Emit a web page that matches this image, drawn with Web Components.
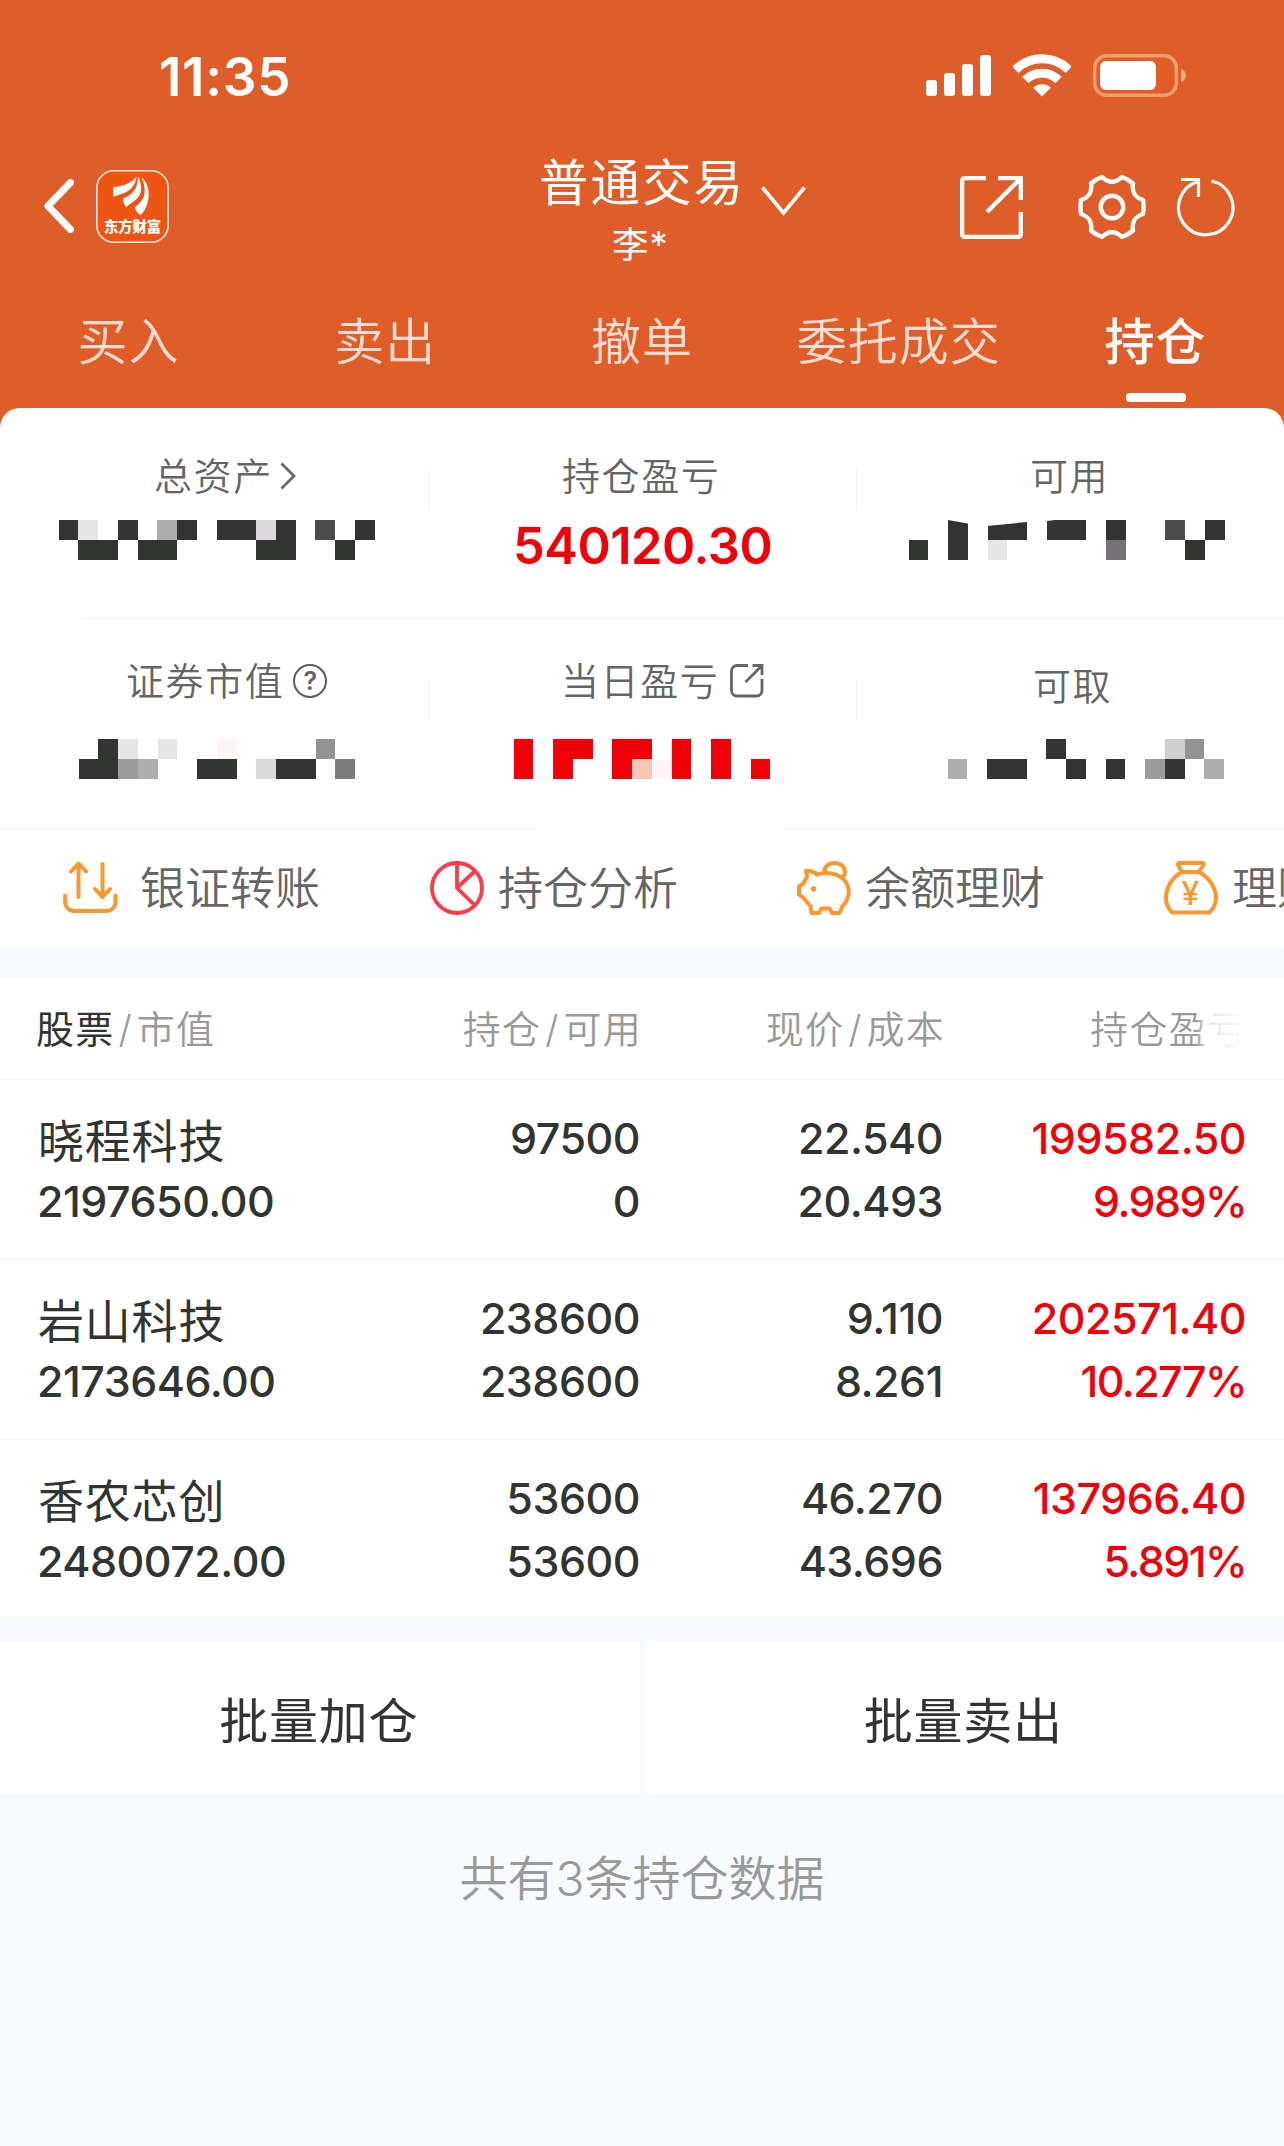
<!DOCTYPE html>
<html lang="zh-CN">
<head>
<meta charset="UTF-8">
<meta name="viewport" content="width=device-width, initial-scale=1.0">
<title>普通交易 - 持仓</title>
<style>
    body {
        margin: 0;
        background: #f7faff;
        font-family: Inter, "Noto Sans CJK SC", sans-serif;
        color: #323431;
        --brand: #df5d29;
        --line: #f3f3f3;
        --up: #f00008;
    }
</style>
</head>
<body>
<trade-app></trade-app>

<script>
// Iconos de la app, cada uno con su propio tamaño
const ICONS = {
    signal: [65, 42, `<g fill="#fff"><rect y="25" width="11" height="16" rx="3"/><rect x="18" y="18" width="11" height="23" rx="3"/><rect x="36" y="9" width="11" height="32" rx="3"/><rect x="54" width="11" height="41" rx="3"/></g>`],
    wifi: [58, 43, `<g fill="none" stroke="#fff" stroke-width="9"><path d="M2.3 15.9a37.7 37.7 0 0 1 53.4 0"/><path d="M12.4 26a23.5 23.5 0 0 1 33.2 0"/></g><path d="M29 42.5l-8.8-8.8a13 13 0 0 1 17.6 0z" fill="#fff"/>`],
    battery: [94, 43, `<rect x="1.7" y="1.7" width="81.6" height="39.6" rx="12" fill="none" stroke="#f09d72" stroke-width="3.4"/><rect x="7" y="7" width="56" height="29" rx="6" fill="#fff"/><path d="M88 15v13c3-1 5-3.5 5-6.500s-2-5.500-5-6.500z" fill="#f2ab87"/>`],
    back: [30, 54, `<path d="M26.500 3.500L4 27l22.500 23.500" fill="none" stroke="#fff" stroke-width="7" stroke-linecap="round" stroke-linejoin="round"/>`],
    logo: [73, 73, `<rect x=".8" y=".8" width="71.400" height="71.400" rx="17" fill="#ef5512" stroke="#ffe9df" stroke-width="1.600"/>
        <g fill="#fff"><path d="M17.500 17c10-.5 18-4 23-10.500C40 15 34 21 27 23.500c-4 1.300-7 2-9.300 3.500-1-3-1-7-.2-10z"/><path d="M42 6.500C42 17 38 24 27 28.500c0 3.500 1.400 6 3 9C34 33 40.500 31 43.800 25c2.500-6 1.200-13-1.800-18.500z"/><path d="M45.500 7.500c7 5 9.500 17 5 28.500-1.500 4-3.500 7-6 9-3-2-5.500-4.500-5.500-8 4-3 8-6.500 9.300-12.500 1-6.500-.3-12-2.800-17z"/></g>
        <text x="36.500" y="62" font-size="14.300" font-weight="900" fill="#fff" text-anchor="middle">东方财富</text>`],
    down: [45, 31, `<path d="M1.500 1.500l21 25.500 21-25.500" fill="none" stroke="#fff" stroke-width="3.600"/>`],
    share: [63, 63, `<g fill="none" stroke="#fff" stroke-width="4.300"><path d="M26 2.200H4.500a2.300 2.300 0 0 0-2.300 2.300v54a2.300 2.300 0 0 0 2.300 2.300h54a2.300 2.300 0 0 0 2.300-2.300V36"/><path d="M38 2.200h22.800V24M60 3L27 36"/></g>`],
    gear: [68, 66, `<g transform="translate(34 33)" fill="none" stroke="#fff" stroke-width="4.400" stroke-linejoin="round"><circle r="11.300"/><path d="M-10-30Q0-20.500 10-30Q16-28 21-23.500C19.500-14 23.500-9.500 31-7Q32 0 31 7C23.500 9.500 19.500 14 21 23.500Q16 28 10 30Q0 20.500-10 30Q-16 28-21 23.500C-19.500 14-23.500 9.500-31 7Q-32 0-31-7C-23.500-9.500-19.500-14-21-23.500Q-16-28-10-30Z"/></g>`],
    reload: [60, 60, `<g fill="none" stroke="#fff" stroke-width="3.200"><path d="M22 4.500A27.200 27.200 0 1 0 35.500 4"/><path d="M5 2.500h17.500v17.500"/></g>`],
    more: [16, 28, `<path d="M1.500 1.500L14 14 1.500 26.500" fill="none" stroke="#686868" stroke-width="2.800"/>`],
    open: [34, 34, `<g fill="none" stroke="#656565" stroke-width="2.800"><path d="M18 1.500H7a5.500 5.500 0 0 0-5.500 5.500v19.500A5.500 5.500 0 0 0 7 32h19.500a5.500 5.500 0 0 0 5.500-5.500V15"/><path d="M22.500 1.500H32V11M31.500 2L15.500 18"/></g>`],
    transfer: [55, 54, `<g fill="none" stroke="#fb972f" stroke-width="4" stroke-linecap="round" stroke-linejoin="round"><path d="M15.500 36V3M8 10.500L15.500 2.500 23 10.500M39.500 3v33M32 28l7.500 8 7.500-8"/><path d="M2.200 34.500v6.500a9 9 0 0 0 9 9h32.300a9 9 0 0 0 9-9v-6.500"/></g>`],
    pie: [54, 54, `<g fill="none" stroke="#fb3d4a" stroke-width="3.800"><circle cx="27" cy="27" r="25"/><path d="M27 2v25l18 17.500M27 27l18-17"/></g>`],
    piggy: [54, 54, `<g fill="none" stroke="#fb972f" stroke-width="4" stroke-linejoin="round"><path d="M9 10c5-.5 8 .5 11 3.500 13-4 27 .5 31 12 2.500 8-1 15-6 20.500L42.500 52H35l-2.500-4.500h-8L22 52h-7.500L13.500 45 6 36.500 2 33.500v-8l4-2.500 4-7z"/><path d="M27 12c0-6 4.500-10 10.500-10s10.500 4 10.500 9c0 2-.5 3.500-1.500 5"/></g><circle cx="16.500" cy="28" r="2.800" fill="#fb972f"/>`],
    bag: [54, 54, `<g fill="none" stroke="#fb972f" stroke-width="4" stroke-linejoin="round"><path d="M18 11L14 4q-.5-2 1.500-2h22.500q2 0 1.500 2l-4.500 7z"/><path d="M18 11C8 16 2 27 2 37c0 6 2 10.500 6 14.500h37.500c4-4 6.500-8.500 6.500-14.500 0-10-7-21-17-26"/></g><text x="26.500" y="44" font-size="32" font-weight="500" fill="#fb972f" text-anchor="middle">¥</text>`]
};

class AppIcon extends HTMLElement {
    constructor() {
        super();
        this.attachShadow({ mode: 'open' });
    }

    connectedCallback() {
        const [width, height, shape] = ICONS[this.getAttribute('name')];
        this.shadowRoot.innerHTML = `
        <style>
            :host { display: block; flex: none; width: ${width}px; height: ${height}px; }
            svg { display: block; }
        </style>
        <svg width="${width}" height="${height}" viewBox="0 0 ${width} ${height}" aria-hidden="true">${shape}</svg>`;
    }
}
customElements.define('app-icon', AppIcon);

// Cifra oculta: cada letra del patrón es un color, el punto es un hueco
const TONES = {
    d: '#323431', l: '#e6e6e6', g: '#adadad', p: '#dcd9dc', m: '#4b4d4a', n: '#939393',
    h: '#9c9c9c', q: '#7b7d7a', k: '#fff4f6', r: '#f00008', s: '#f6c7b5', v: '#757275', c: '#cecece'
};

class PixelMask extends HTMLElement {
    constructor() {
        super();
        this.attachShadow({ mode: 'open' });
    }

    connectedCallback() {
        const rows = this.getAttribute('pattern').split('/');
        const unit = 19.75;
        const width = rows[0].length * unit;
        const cells = rows.map((row, y) => [...row].map((tone, x) => tone === '.' ? '' :
            `<rect x="${Math.floor(x * unit)}" y="${y * 20}" width="${Math.floor((x + 1) * unit) - Math.floor(x * unit)}" height="20" fill="${TONES[tone]}"/>`
        ).join('')).join('');
        const cut = this.hasAttribute('cut')
            ? '<path d="M39 0h20v3.500zM78 6l40-4V0H78zM138 0h8l-8 1z" fill="#fff"/>' : '';
        this.shadowRoot.innerHTML = `
        <style>
            :host { display: block; height: 40px; }
            svg { display: block; }
        </style>
        <svg width="${width}" height="40">${cells}${cut}</svg>`;
    }
}
customElements.define('pixel-mask', PixelMask);

class StatusBar extends HTMLElement {
    constructor() {
        super();
        this.attachShadow({ mode: 'open' });
        this.shadowRoot.innerHTML = `
        <style>
            :host { display: flex; align-items: center; height: 154px; padding: 0 97px 0 159px; color: #fff; }
            time { font-size: 53px; font-weight: 600; letter-spacing: 0.700px; line-height: 60px; }
            .state { display: flex; gap: 22px; margin: 0 0 3px auto; align-items: center; }
        </style>
        <time>11:35</time>
        <div class="state">
            <app-icon name="signal"></app-icon>
            <app-icon name="wifi"></app-icon>
            <app-icon name="battery"></app-icon>
        </div>`;
    }
}
customElements.define('status-bar', StatusBar);

class TradeNav extends HTMLElement {
    constructor() {
        super();
        this.attachShadow({ mode: 'open' });
        this.shadowRoot.innerHTML = `
        <style>
            :host { display: flex; height: 110px; color: #fff; }
            .side { display: flex; align-items: center; height: 106px; }
            .left { width: 495px; height: 104px; padding-left: 44px; gap: 22px; }
            .title { width: 200px; padding-top: 1px; text-align: center; }
            h1 { margin: 0; font-size: 49.500px; font-weight: 400; line-height: 56px; letter-spacing: 2px; white-space: nowrap; }
            p { margin: 14px 0 0 3px; font-size: 36.500px; line-height: 40px; letter-spacing: 1px; }
            .drop { margin: 32px 0 0 22px; }
            .right { margin-left: auto; padding-right: 48px; }
            .gear { margin: 0 30px 0 55px; }
        </style>
        <div class="side left">
            <app-icon name="back"></app-icon>
            <app-icon name="logo"></app-icon>
        </div>
        <div class="title">
            <h1><slot></slot></h1>
            <p><slot name="user"></slot></p>
        </div>
        <app-icon class="drop" name="down"></app-icon>
        <div class="side right">
            <app-icon name="share"></app-icon>
            <app-icon class="gear" name="gear"></app-icon>
            <app-icon name="reload"></app-icon>
        </div>`;
    }
}
customElements.define('trade-nav', TradeNav);

class TradeTab extends HTMLElement {
    constructor() {
        super();
        this.attachShadow({ mode: 'open' });
        this.shadowRoot.innerHTML = `
        <style>
            :host { flex: 1 1 0; display: flex; flex-direction: column; align-items: center; height: 144px; color: #ffddd2; font-size: 50px; font-weight: 350; }
            span { margin-top: 48px; line-height: 60px; letter-spacing: 1px; white-space: nowrap; }
            :host([active]) { color: #fff; font-weight: 500; }
            :host([active])::after { content: ""; width: 60px; height: 9px; margin-top: 21px; border-radius: 4px; background: #fff; }
        </style>
        <span><slot></slot></span>`;
    }
}
customElements.define('trade-tab', TradeTab);

class AssetCell extends HTMLElement {
    constructor() {
        super();
        this.attachShadow({ mode: 'open' });
        this.shadowRoot.innerHTML = `
        <style>
            :host { display: block; flex: 1 1 0; min-width: 0; }
            .label { display: flex; align-items: center; height: 44px; margin-top: var(--top, 46px); padding-left: var(--label-start); font-size: 38px; line-height: 44px; letter-spacing: 1.600px; color: #656565; font-weight: 350; white-space: nowrap; }
            .value { height: 50px; margin-top: var(--gap, 22px); padding-left: var(--value-start); font-size: 50.500px; font-weight: 600; line-height: 52px; letter-spacing: -0.500px; color: var(--up); }
        </style>
        <div class="label"><slot name="label"></slot></div>
        <div class="value"><slot></slot></div>`;
    }
}
customElements.define('asset-cell', AssetCell);

class AssetPanel extends HTMLElement {
    constructor() {
        super();
        this.attachShadow({ mode: 'open' });
        this.shadowRoot.innerHTML = `
        <style>
            :host { display: block; background: #fff; border-radius: 20px 20px 0 0; }
            .row { display: grid; grid-template-columns: 428px 1px 427px 1px 1fr; height: 210px; }
            .rule { height: 1px; margin-left: 81px; background: var(--line); }
            .row + .rule + .row { height: 209px; }
            i { width: 1px; height: 42px; margin-top: 60px; background: var(--line); }
            .tip { display: flex; justify-content: center; align-items: center; box-sizing: border-box; width: 34px; height: 34px; margin-left: 9px; border: 2.500px solid #5c5c5c; border-radius: 50%; font-size: 25px; line-height: 30px; letter-spacing: 0; font-weight: 600; }
            .foot { display: flex; justify-content: space-between; height: 1px; }
            .foot b { width: 536px; background: var(--line); }
            .foot b + b { width: 499px; }
        </style>
        <div class="row">
            <asset-cell style="--label-start: 154px; --value-start: 59px">
                <span slot="label">总资产</span>
                <app-icon slot="label" name="more" style="margin-left: 7px"></app-icon>
                <pixel-mask pattern="dl.d.gd.ddpd.m.d/.dd.dd....dd..d."></pixel-mask>
            </asset-cell>
            <i></i>
            <asset-cell style="--label-start: 133px; --value-start: 84px">
                <span slot="label">持仓盈亏</span>540120.30
            </asset-cell>
            <i></i>
            <asset-cell style="--label-start: 173px; --value-start: 52px">
                <span slot="label">可用</span>
                <pixel-mask cut pattern="..d.dd.dd.d..m.d/d.d.l.....v...d."></pixel-mask>
            </asset-cell>
        </div>
        <div class="rule"></div>
        <div class="row">
            <asset-cell style="--top: 40px; --gap: 36px; --label-start: 126px; --value-start: 79px">
                <span slot="label">证券市值</span>
                <span slot="label" class="tip">?</span>
                <pixel-mask pattern=".dl.l..k....n./ddhg..dd.pdd.q"></pixel-mask>
            </asset-cell>
            <i></i>
            <asset-cell style="--top: 40px; --gap: 36px; --label-start: 132px; --value-start: 85px">
                <span slot="label">当日盈亏</span>
                <app-icon slot="label" name="open" style="margin-left: 11px"></app-icon>
                <pixel-mask pattern="r.rr.rr.r.r../r.r..rskr.r.r"></pixel-mask>
            </asset-cell>
            <i></i>
            <asset-cell style="--top: 45px; --gap: 31px; --label-start: 176px; --value-start: 91px">
                <span slot="label">可取</span>
                <pixel-mask pattern=".....d.....cn./g.dd..d.d.hd.g"></pixel-mask>
            </asset-cell>
        </div>
        <div class="foot"><b></b><b></b></div>`;
    }
}
customElements.define('asset-panel', AssetPanel);

class QuickAction extends HTMLElement {
    constructor() {
        super();
        this.attachShadow({ mode: 'open' });
    }

    connectedCallback() {
        this.shadowRoot.innerHTML = `
        <style>
            :host { flex: none; display: flex; align-items: center; width: 367px; gap: var(--gap, 13px); font-size: 45px; line-height: 54px; font-weight: 350; color: #656565; white-space: nowrap; }
            app-icon { margin-bottom: 2px; }
        </style>
        <app-icon name="${this.getAttribute('icon')}"></app-icon>
        <span><slot></slot></span>`;
    }
}
customElements.define('quick-action', QuickAction);

const HOLDINGS = [
    ['晓程科技', '2197650.00', '97500', '0', '22.540', '20.493', '199582.50', '9.989%'],
    ['岩山科技', '2173646.00', '238600', '238600', '9.110', '8.261', '202571.40', '10.277%'],
    ['香农芯创', '2480072.00', '53600', '53600', '46.270', '43.696', '137966.40', '5.891%']
];

class HoldingRow extends HTMLElement {
    constructor() {
        super();
        this.attachShadow({ mode: 'open' });
    }

    set data([name, value, total, usable, price, cost, profit, rate]) {
        this.shadowRoot.innerHTML = `
        <style>
            :host { display: grid; grid-template-columns: 300px 303px 303px 303px; box-sizing: border-box; height: 180px; padding: 27px 37px 0; border-bottom: 1px solid var(--line); background: #fff; font-size: 43px; font-weight: 550; line-height: 63px; letter-spacing: -0.500px; text-align: right; }
            .stock { text-align: left; }
            p { margin: 0; height: 63px; white-space: nowrap; }
            .name { font-size: 46px; font-weight: 400; letter-spacing: 0.800px; padding: 3px 0 0 1px; height: 60px; }
            .up { color: var(--up); }
            .rate { letter-spacing: -1.600px; }
        </style>
        <div class="stock"><p class="name">${name}</p><p>${value}</p></div>
        <div><p>${total}</p><p>${usable}</p></div>
        <div><p>${price}</p><p>${cost}</p></div>
        <div class="up"><p>${profit}</p><p class="rate">${rate}</p></div>`;
    }
}
customElements.define('holding-row', HoldingRow);

class HoldingTable extends HTMLElement {
    constructor() {
        super();
        this.attachShadow({ mode: 'open' });
        this.shadowRoot.innerHTML = `
        <style>
            :host { display: block; margin-top: 30px; }
            header { display: grid; grid-template-columns: 302px 304px 303px 302px; height: 102px; box-sizing: border-box; padding: 0 37px 0 36px; border-bottom: 1px solid #f8f1f2; background: #fff; font-size: 38px; font-weight: 350; line-height: 102px; letter-spacing: 1.200px; color: #999; text-align: right; white-space: nowrap; }
            header span:first-child { text-align: left; }
            b { font-weight: 400; color: #323431; }
            s { text-decoration: none; margin: 0 4px; }
            .fade { background: linear-gradient(90deg, #999 83%, #e9e4e6 87%, #fff 100%); background-clip: text; -webkit-background-clip: text; color: transparent; }
        </style>
        <header>
            <span><b>股票</b><s>/</s>市值</span>
            <span>持仓<s>/</s>可用</span>
            <span>现价<s>/</s>成本</span>
            <span class="fade">持仓盈亏</span>
        </header>`;
        for (const item of HOLDINGS) {
            const row = document.createElement('holding-row');
            row.data = item;
            this.shadowRoot.append(row);
        }
    }
}
customElements.define('holding-table', HoldingTable);

class BatchActions extends HTMLElement {
    constructor() {
        super();
        this.attachShadow({ mode: 'open' });
        this.shadowRoot.innerHTML = `
        <style>
            :host { display: flex; gap: 5px; margin-top: 22px; }
            div { flex: 1 1 0; height: 152px; background: #fff; font-size: 49px; line-height: 159px; letter-spacing: 0.800px; text-indent: -2px; text-align: center; }
        </style>
        <div>批量加仓</div>
        <div>批量卖出</div>`;
    }
}
customElements.define('batch-actions', BatchActions);

class TradeApp extends HTMLElement {
    constructor() {
        super();
        this.attachShadow({ mode: 'open' });
        this.shadowRoot.innerHTML = `
        <style>
            :host { display: block; width: 1284px; height: 2146px; overflow: hidden; }
            .top { background: var(--brand); }
            nav { display: flex; }
            .actions { display: flex; height: 119px; padding-left: 63px; background: #fff; overflow: hidden; }
            .total { margin: 0; padding-top: 55px; font-size: 48px; font-weight: 350; line-height: 60px; text-align: center; color: #999; }
        </style>
        <div class="top">
            <status-bar></status-bar>
            <trade-nav>普通交易<span slot="user">李*</span></trade-nav>
            <nav>
                <trade-tab>买入</trade-tab>
                <trade-tab>卖出</trade-tab>
                <trade-tab>撤单</trade-tab>
                <trade-tab>委托成交</trade-tab>
                <trade-tab active>持仓</trade-tab>
            </nav>
            <asset-panel></asset-panel>
        </div>
        <div class="actions">
            <quick-action icon="transfer" style="--gap: 22px">银证转账</quick-action>
            <quick-action icon="pie" style="--gap: 14px">持仓分析</quick-action>
            <quick-action icon="piggy" style="--gap: 14px">余额理财</quick-action>
            <quick-action icon="bag" style="--gap: 14px">理财</quick-action>
        </div>
        <holding-table></holding-table>
        <batch-actions></batch-actions>
        <p class="total">共有3条持仓数据</p>`;
    }
}
customElements.define('trade-app', TradeApp);
</script>
</body>
</html>
